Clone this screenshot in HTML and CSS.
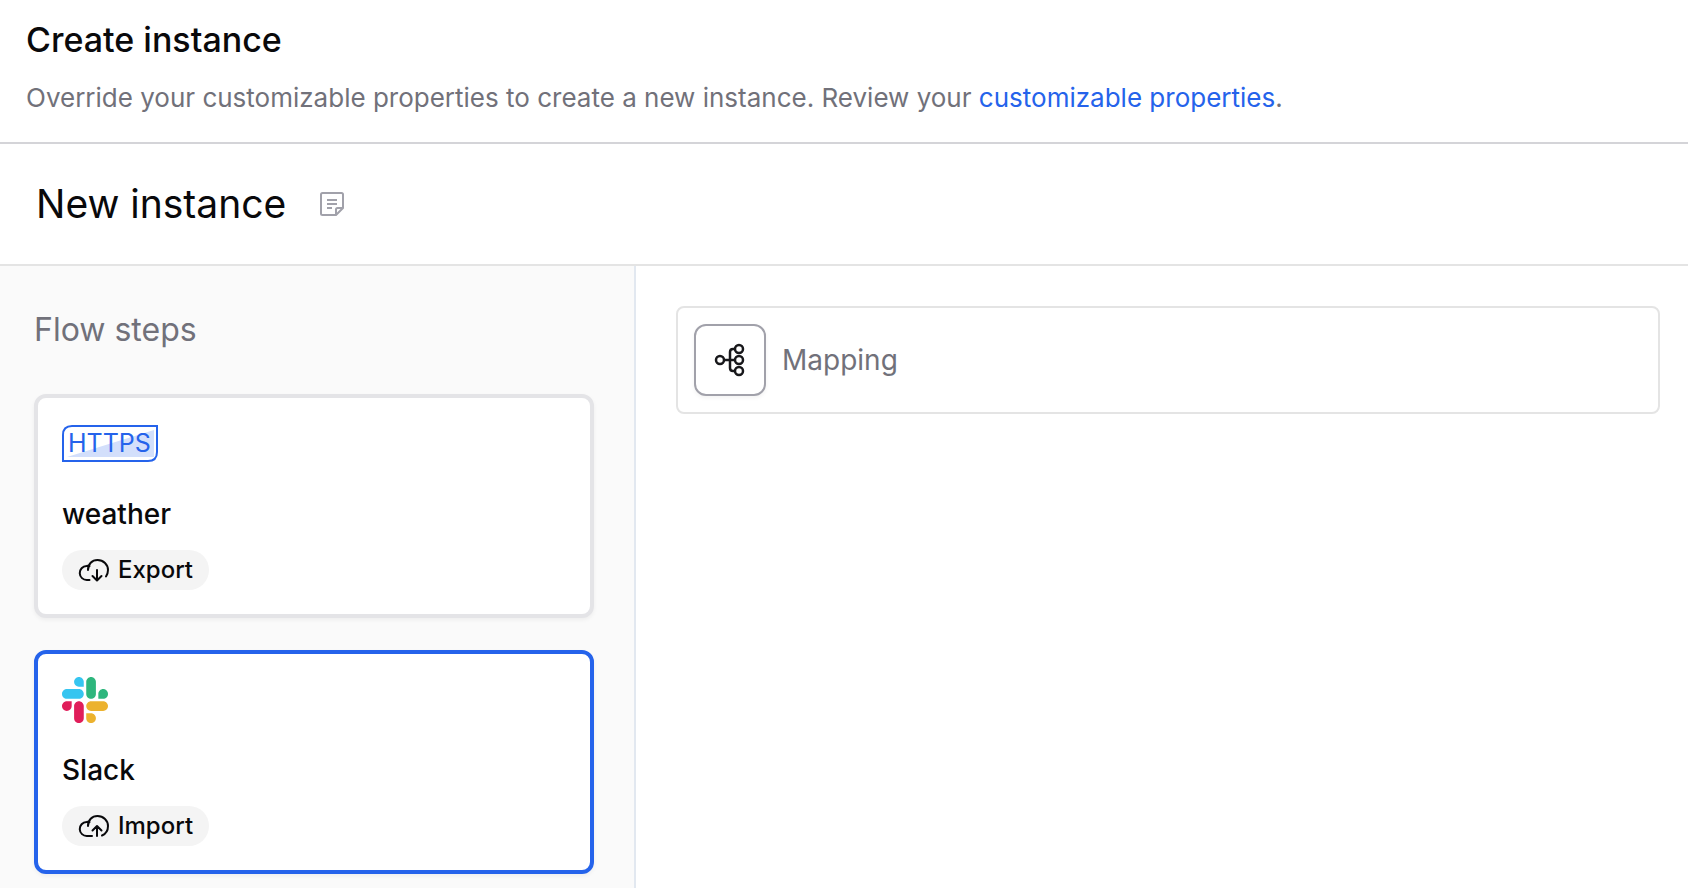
FILE: index.html
```html
<!doctype html>
<html lang="en">
<head>
    <meta charset="utf-8">
    <meta name="viewport" content="width=device-width, initial-scale=1.0">
    <title>Create instance</title>
    <link rel="stylesheet" href="styles.css">
</head>
<body>
    <header class="page-header">
        <h1>Create instance</h1>
        <p>Override your customizable properties to create a new instance. Review your <a href="#">customizable properties</a>.</p>
    </header>
    <div class="instance-bar">
        <h2>New instance</h2>
        <button type="button" class="note-button" aria-label="Add description">
            <svg width="24" height="24" viewBox="0 0 24 24" fill="none" stroke="currentColor" stroke-width="2" stroke-linejoin="round">
                <path d="M16 23H2.500Q1 23 1 21.500V2.500Q1 1 2.500 1H21.500Q23 1 23 2.500V16L16 23V17.500Q16 16 17.500 16H23"/>
                <path d="M7 8H17M7 12H17M7 16H12"/>
            </svg>
        </button>
    </div>
    <div class="workspace">
        <aside class="sidebar">
            <h3>Flow steps</h3>
            <button type="button" class="step">
                <span class="step-icon">
                    <svg width="96" height="38" viewBox="0 0 96 38">
                        <path d="M5 32L92 5V32Z" fill="#d3dffb"/>
                        <path d="M10 1H95V27Q95 36 86 36H1V10Q1 1 10 1Z" fill="none" stroke="#2563eb" stroke-width="2"/>
                        <text x="6" y="27" class="https-text">HTTPS</text>
                    </svg>
                </span>
                <span class="step-name">weather</span>
                <span class="tag">
                    <svg width="32" height="24" viewBox="0 0 32 24" fill="none" stroke="currentColor" stroke-width="2" stroke-linecap="round" stroke-linejoin="round">
                        <path d="M11.500 22H9A7 7 0 0 1 8.500 8Q10 7.600 11.500 8.200M10 12C10 6 14 2 19.500 2C25.500 2 30 6.500 30 12Q30 15.500 28 18.500"/>
                        <path d="M19 12V22M14.500 18L19 22.500L23.500 18"/>
                    </svg>
                    Export
                </span>
            </button>
            <button type="button" class="step selected">
                <span class="step-icon">
                    <svg width="46" height="46" viewBox="0 0 122.800 122.800">
                        <path d="M25.800 77.600c0 7.100-5.800 12.900-12.900 12.900S0 84.700 0 77.600s5.800-12.900 12.900-12.900h12.900v12.900zm6.500 0c0-7.100 5.800-12.900 12.900-12.900s12.900 5.800 12.900 12.900v32.300c0 7.100-5.800 12.900-12.900 12.900s-12.900-5.800-12.900-12.900V77.600z" fill="#e01e5a"/>
                        <path d="M45.200 25.800c-7.100 0-12.900-5.800-12.900-12.900S38.100 0 45.200 0s12.900 5.800 12.900 12.900v12.900H45.200zm0 6.500c7.100 0 12.900 5.800 12.900 12.900s-5.800 12.900-12.900 12.900H12.900C5.800 58.100 0 52.300 0 45.200s5.800-12.900 12.900-12.900h32.300z" fill="#36c5f0"/>
                        <path d="M97 45.200c0-7.100 5.800-12.900 12.900-12.900s12.900 5.800 12.900 12.900-5.800 12.900-12.900 12.900H97V45.200zm-6.500 0c0 7.100-5.800 12.900-12.900 12.900s-12.900-5.800-12.900-12.900V12.900C64.700 5.800 70.500 0 77.600 0s12.900 5.800 12.900 12.900v32.300z" fill="#2eb67d"/>
                        <path d="M77.600 97c7.100 0 12.900 5.800 12.900 12.900s-5.800 12.900-12.900 12.900-12.900-5.800-12.900-12.900V97h12.900zm0-6.500c-7.100 0-12.900-5.800-12.900-12.900s5.800-12.900 12.900-12.900h32.300c7.100 0 12.900 5.800 12.900 12.900s-5.800 12.900-12.900 12.900H77.600z" fill="#ecb22e"/>
                    </svg>
                </span>
                <span class="step-name">Slack</span>
                <span class="tag">
                    <svg width="32" height="24" viewBox="0 0 32 24" fill="none" stroke="currentColor" stroke-width="2" stroke-linecap="round" stroke-linejoin="round">
                        <path d="M14 22H9A7 7 0 0 1 8.500 8Q10 7.600 11.500 8.200M10 12C10 6 14 2 19.500 2C25.500 2 30 6.500 30 12Q30 19 24 21.500"/>
                        <path d="M19 22V12.500M14.500 16.500L19 12L23.500 16.500"/>
                    </svg>
                    Import
                </span>
            </button>
        </aside>
        <main class="content">
            <div class="mapping">
                <button type="button" class="mapping-button" aria-labelledby="mapping-label">
                    <svg width="32" height="34" viewBox="0 0 32 34" fill="none" stroke="currentColor" stroke-width="2.500">
                        <circle cx="6" cy="17" r="4"/>
                        <circle cx="25" cy="6" r="4"/>
                        <circle cx="25" cy="17" r="4"/>
                        <circle cx="25" cy="28" r="4"/>
                        <path d="M10 17H21M21 6H19Q16 6 16 9V25Q16 28 19 28H21"/>
                    </svg>
                </button>
                <span id="mapping-label">Mapping</span>
            </div>
        </main>
    </div>
</body>
</html>
```
FILE: styles.css
```css
* {
    box-sizing: border-box;
}
body {
    font-family: Inter, "Liberation Sans", sans-serif;
    color: #09090b;
    background-color: #fff;
    margin: 0;
    min-height: 100vh;
    display: flex;
    flex-direction: column;
}
h1, h2, h3, p {
    margin: 0;
}
button {
    font: inherit;
    color: inherit;
    padding: 0;
    cursor: pointer;
}
svg {
    display: block;
    flex: none;
}
.page-header {
    padding: 16px 26px 24px;
    border-bottom: 2px solid #d4d4d8;
}
.page-header h1 {
    font-size: 34px;
    line-height: 48px;
    font-weight: 500;
}
.page-header p {
    margin-top: 14px;
    font-size: 26px;
    line-height: 40px;
    color: #71717a;
}
.page-header a {
    color: #2563eb;
    text-decoration: none;
}
.instance-bar {
    display: flex;
    align-items: center;
    gap: 34px;
    padding: 36px;
    border-bottom: 2px solid #e4e4e4;
}
.instance-bar h2 {
    font-size: 39px;
    line-height: 48px;
    font-weight: 400;
}
.note-button {
    border: none;
    background: none;
    color: #a1a1aa;
}
.workspace {
    flex: 1;
    display: flex;
}
.sidebar {
    flex: none;
    width: 636px;
    padding: 40px 40px 14px 34px;
    background-color: #fafafa;
    border-right: 2px solid #e2e8f0;
    display: flex;
    flex-direction: column;
    gap: 32px;
}
.sidebar h3 {
    margin-bottom: 8px;
    font-size: 32px;
    line-height: 48px;
    font-weight: 400;
    color: #71717a;
}
.step {
    display: flex;
    flex-direction: column;
    align-items: flex-start;
    padding: 24px;
    text-align: left;
    background-color: #fff;
    border: 4px solid #e4e4e7;
    border-radius: 12px;
    box-shadow: 0 2px 4px rgba(0, 0, 0, 0.05);
}
.step.selected {
    border-color: #2563eb;
}
.step-icon {
    height: 44px;
    display: flex;
    align-items: center;
}
.https-text {
    font-family: Inter, sans-serif;
    font-size: 25px;
    font-weight: 400;
    fill: #2563eb;
}
.step-name {
    margin: 28px 0 16px;
    font-size: 28px;
    line-height: 40px;
    font-weight: 500;
}
.tag {
    display: flex;
    align-items: center;
    gap: 8px;
    height: 40px;
    padding: 0 16px;
    font-size: 24px;
    line-height: 28px;
    font-weight: 500;
    background-color: #f4f4f4;
    border-radius: 20px;
}
.content {
    flex: 1;
    padding: 40px 28px 40px 40px;
}
.mapping {
    display: flex;
    align-items: center;
    gap: 16px;
    padding: 16px;
    border: 2px solid #e4e4e4;
    border-radius: 8px;
    font-size: 28px;
    color: #71717a;
}
.mapping-button {
    width: 72px;
    height: 72px;
    display: flex;
    align-items: center;
    justify-content: center;
    color: #18181b;
    background-color: #fff;
    border: 2px solid #a1a1aa;
    border-radius: 12px;
    box-shadow: 0 2px 4px rgba(0, 0, 0, 0.05);
}
```
